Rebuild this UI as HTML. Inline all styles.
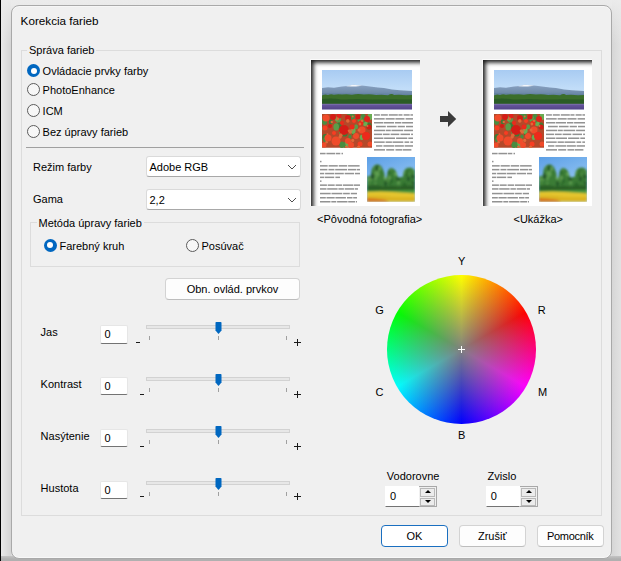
<!DOCTYPE html>
<html><head><meta charset="utf-8">
<style>
*{margin:0;padding:0;box-sizing:border-box}
html,body{width:621px;height:561px;overflow:hidden}
body{position:relative;background:#dcdcdc;font-family:"Liberation Sans",sans-serif;font-size:11px;color:#000}
.a{position:absolute}
.t{position:absolute;line-height:13px;white-space:nowrap}
#win{position:absolute;left:11px;top:5px;width:601px;height:554px;border:1px solid #a9a9a9;border-radius:8px;background:#f0f0f0;box-shadow:inset 0 1px #f6f6f6,inset 0 -1px #f8f8f8}
.grp{position:absolute;border:1px solid #dcdcdc}
.gt{position:absolute;line-height:13px;background:#f0f0f0;padding:0 2px;white-space:nowrap}
.rad{position:absolute;width:13px;height:13px;border-radius:50%;border:1px solid #5b5b5b;background:#f7f7f7}
.rad.on{border:none;background:#0067c0}
.rad.on::after{content:"";position:absolute;left:3.5px;top:3.5px;width:6px;height:6px;border-radius:50%;background:#fff}
.combo{position:absolute;background:#fff;border:1px solid #dadada;border-bottom-color:#a8a8a8;border-radius:3px}
.btn{position:absolute;background:#fdfdfd;border:1px solid #d3d3d3;border-bottom-color:#bdbdbd;border-radius:4px;text-align:center;line-height:20.5px}
.edit{position:absolute;background:#fff;border:1px solid #e6e6e6;border-bottom-color:#737373;border-radius:2px}
.track{position:absolute;height:4px;background:#e7e7e7;border:1px solid #d2d2d2}
.tick{position:absolute;width:1px;height:4px;background:#a0a0a0}
.thumb{position:absolute}
.spin{position:absolute;width:18px;height:20.6px;border:1px solid #a8a8a8;border-left:none;background:#f0f0f0}
.sb{position:absolute;left:1px;width:15px;height:8.6px;border:1px solid #b9b9b9;background:#ececec}
.up,.dn{position:absolute;left:4px;width:0;height:0;border-left:3px solid transparent;border-right:3px solid transparent}
.up{top:1px;border-bottom:3.3px solid #000}
.dn{top:1px;border-top:3.3px solid #000}
</style></head><body>
<div class="a" style="left:0;top:0;width:1px;height:561px;background:#000"></div>
<div class="a" style="left:1px;top:0;width:620px;height:6px;background:#e4e4e4"></div>
<div class="a" style="left:1px;top:0;width:10px;height:561px;background:linear-gradient(90deg,#e8e8e8,#d4d4d4)"></div>
<div class="a" style="left:612px;top:0;width:9px;height:561px;background:linear-gradient(90deg,#d6d6d6,#e2e2e2)"></div>
<div class="a" style="left:1px;top:0;width:620px;height:45px;background:linear-gradient(180deg,#ebebeb 0,rgba(235,235,235,0.6) 15px,rgba(235,235,235,0) 45px)"></div>
<div class="a" style="left:1px;top:556px;width:620px;height:5px;background:linear-gradient(180deg,#c4c4c4,#b0b0b0 3px)"></div>
<div id="win"></div>

<div class="t" style="left:20.6px;top:13.6px;font-size:11.7px">Korekcia farieb</div>

<!-- main group -->
<div class="grp" style="left:21px;top:50px;width:581px;height:466px"></div>
<div class="gt" style="left:27px;top:44px">Správa farieb</div>

<div class="rad on" style="left:27px;top:64px"></div><div class="t" style="left:42.6px;top:64.5px">Ovládacie prvky farby</div>
<div class="rad" style="left:27px;top:83px"></div><div class="t" style="left:42.6px;top:83.5px">PhotoEnhance</div>
<div class="rad" style="left:27px;top:104px"></div><div class="t" style="left:42.6px;top:105px">ICM</div>
<div class="rad" style="left:27px;top:125px"></div><div class="t" style="left:42.6px;top:125.5px">Bez úpravy farieb</div>

<div class="a" style="left:26px;top:147px;width:278px;height:1px;background:#a0a0a0"></div>

<div class="t" style="left:33px;top:160.5px">Režim farby</div>
<div class="t" style="left:33px;top:192.5px">Gama</div>

<div class="combo" style="left:146px;top:156px;width:155px;height:21px"></div>
<div class="t" style="left:149.5px;top:160.5px">Adobe RGB</div>
<div class="combo" style="left:146px;top:189px;width:155px;height:21px"></div>
<div class="t" style="left:149.5px;top:193.5px">2,2</div>

<!-- inner group -->
<div class="grp" style="left:30px;top:222px;width:270px;height:45px"></div>
<div class="gt" style="left:36.5px;top:216.5px">Metóda úpravy farieb</div>
<div class="rad on" style="left:43.5px;top:238.5px"></div><div class="t" style="left:59.5px;top:239.5px">Farebný kruh</div>
<div class="rad" style="left:185.5px;top:238.5px"></div><div class="t" style="left:201.5px;top:239.5px">Posúvač</div>

<div class="btn" style="left:165px;top:278px;width:135px;height:22px">Obn. ovlád. prvkov</div>


<!-- previews -->
<div class="t" style="left:317px;top:212.5px">&lt;Pôvodná fotografia&gt;</div>
<div class="t" style="left:513.5px;top:212.5px">&lt;Ukážka&gt;</div>

<!-- color wheel -->
<div class="a" style="left:386.7px;top:274.5px;width:149px;height:149px;border-radius:50%;background:radial-gradient(circle closest-side,#808080,rgba(128,128,128,0)),conic-gradient(#ff0 0deg,#f00 60deg,#f0f 120deg,#00f 180deg,#0ff 240deg,#0f0 300deg,#ff0 360deg)"></div>


<div class="btn" style="left:381px;top:525px;width:67px;height:22px;border:1.5px solid #1a6fc0;background:#fff">OK</div>
<div class="btn" style="left:459px;top:525px;width:66.5px;height:22px">Zrušiť</div>
<div class="btn" style="left:537px;top:525px;width:66.5px;height:22px;letter-spacing:-0.3px">Pomocník</div>

<div class="t" style="left:40.6px;top:325.8px">Jas</div>
<div class="edit" style="left:100px;top:325.0px;width:28px;height:18.6px"></div>
<div class="t" style="left:104.4px;top:327.6px">0</div>
<div class="a" style="left:136px;top:341.9px;width:4px;height:1.15px;background:#1a1a1a"></div>
<div class="a" style="left:294px;top:341.9px;width:7px;height:1.15px;background:#1a1a1a"></div><div class="a" style="left:296.9px;top:339.0px;width:1.15px;height:7px;background:#1a1a1a"></div>
<div class="track" style="left:146px;top:325.0px;width:144px"></div>
<div class="tick" style="left:149px;top:336.0px"></div>
<div class="tick" style="left:218px;top:336.0px"></div>
<div class="tick" style="left:286px;top:336.0px"></div>
<svg class="a" style="left:215px;top:322.0px" width="7" height="12" viewBox="0 0 7 12"><path d="M0.5 0.8Q0.5 0 1.3 0H5.7Q6.5 0 6.5 0.8V8.5L3.5 12L0.5 8.5Z" fill="#0067c0"/></svg>
<div class="t" style="left:40.6px;top:377.8px">Kontrast</div>
<div class="edit" style="left:100px;top:376.9px;width:28px;height:18.6px"></div>
<div class="t" style="left:104.4px;top:379.6px">0</div>
<div class="a" style="left:140px;top:393.8px;width:4px;height:1.15px;background:#1a1a1a"></div>
<div class="a" style="left:294px;top:393.8px;width:7px;height:1.15px;background:#1a1a1a"></div><div class="a" style="left:296.9px;top:390.9px;width:1.15px;height:7px;background:#1a1a1a"></div>
<div class="track" style="left:146px;top:377.0px;width:144px"></div>
<div class="tick" style="left:149px;top:388.0px"></div>
<div class="tick" style="left:218px;top:388.0px"></div>
<div class="tick" style="left:286px;top:388.0px"></div>
<svg class="a" style="left:215px;top:374.0px" width="7" height="12" viewBox="0 0 7 12"><path d="M0.5 0.8Q0.5 0 1.3 0H5.7Q6.5 0 6.5 0.8V8.5L3.5 12L0.5 8.5Z" fill="#0067c0"/></svg>
<div class="t" style="left:40.6px;top:429.8px">Nasýtenie</div>
<div class="edit" style="left:100px;top:428.7px;width:28px;height:18.6px"></div>
<div class="t" style="left:104.4px;top:431.6px">0</div>
<div class="a" style="left:140px;top:445.8px;width:4px;height:1.15px;background:#1a1a1a"></div>
<div class="a" style="left:294px;top:445.8px;width:7px;height:1.15px;background:#1a1a1a"></div><div class="a" style="left:296.9px;top:442.9px;width:1.15px;height:7px;background:#1a1a1a"></div>
<div class="track" style="left:146px;top:429.0px;width:144px"></div>
<div class="tick" style="left:149px;top:440.0px"></div>
<div class="tick" style="left:218px;top:440.0px"></div>
<div class="tick" style="left:286px;top:440.0px"></div>
<svg class="a" style="left:215px;top:426.0px" width="7" height="12" viewBox="0 0 7 12"><path d="M0.5 0.8Q0.5 0 1.3 0H5.7Q6.5 0 6.5 0.8V8.5L3.5 12L0.5 8.5Z" fill="#0067c0"/></svg>
<div class="t" style="left:40.6px;top:481.8px">Hustota</div>
<div class="edit" style="left:100px;top:480.6px;width:28px;height:18.6px"></div>
<div class="t" style="left:104.4px;top:483.6px">0</div>
<div class="a" style="left:140px;top:495.9px;width:4px;height:1.15px;background:#1a1a1a"></div>
<div class="a" style="left:294px;top:495.9px;width:7px;height:1.15px;background:#1a1a1a"></div><div class="a" style="left:296.9px;top:493.0px;width:1.15px;height:7px;background:#1a1a1a"></div>
<div class="track" style="left:146px;top:481.0px;width:144px"></div>
<div class="tick" style="left:149px;top:492.0px"></div>
<div class="tick" style="left:218px;top:492.0px"></div>
<div class="tick" style="left:286px;top:492.0px"></div>
<svg class="a" style="left:215px;top:478.0px" width="7" height="12" viewBox="0 0 7 12"><path d="M0.5 0.8Q0.5 0 1.3 0H5.7Q6.5 0 6.5 0.8V8.5L3.5 12L0.5 8.5Z" fill="#0067c0"/></svg>
<div class="t" style="left:451.6px;top:255.3px;width:20px;text-align:center">Y</div>
<div class="t" style="left:369.6px;top:303.7px;width:20px;text-align:center">G</div>
<div class="t" style="left:531.8px;top:303.7px;width:20px;text-align:center">R</div>
<div class="t" style="left:369.6px;top:386.3px;width:20px;text-align:center">C</div>
<div class="t" style="left:532.5px;top:386.3px;width:20px;text-align:center">M</div>
<div class="t" style="left:451.6px;top:428.5px;width:20px;text-align:center">B</div>
<div class="t" style="left:386.8px;top:469.6px">Vodorovne</div>
<div class="edit" style="left:385.0px;top:486.3px;width:34.5px;height:20.5px;border-color:#fff #fff #737373 #fff;border-radius:0"></div>
<div class="t" style="left:390.0px;top:489.6px">0</div>
<div class="spin" style="left:419.0px;top:486.3px"><div class="sb" style="top:1px"><div class="up"></div></div><div class="sb" style="top:10.4px"><div class="dn"></div></div></div>
<div class="t" style="left:487.6px;top:469.6px">Zvislo</div>
<div class="edit" style="left:485.8px;top:486.3px;width:34.5px;height:20.5px;border-color:#fff #fff #737373 #fff;border-radius:0"></div>
<div class="t" style="left:490.8px;top:489.6px">0</div>
<div class="spin" style="left:519.8px;top:486.3px"><div class="sb" style="top:1px"><div class="up"></div></div><div class="sb" style="top:10.4px"><div class="dn"></div></div></div>
<div class="a" style="left:310px;top:59px;width:110.1px;height:147px;border-left:1px solid #fafafa;border-top:1px solid #fafafa;box-sizing:border-box"></div>
<div class="a" style="left:311px;top:60px;width:109.1px;height:146px;background:#fff;overflow:hidden">
<svg class="a" style="left:11px;top:10px" width="90" height="39.5" viewBox="0 0 90 39.5"><defs><linearGradient id="sk" x1="0" y1="0" x2="0" y2="1"><stop offset="0" stop-color="#a8cbf2"/><stop offset=".45" stop-color="#c0dcf8"/><stop offset="1" stop-color="#d8ecfa"/></linearGradient><linearGradient id="lv" x1="0" y1="0" x2="0" y2="1"><stop offset="0" stop-color="#8276b0"/><stop offset=".3" stop-color="#62529a"/><stop offset="1" stop-color="#524488"/></linearGradient><linearGradient id="mt" x1="0" y1="0" x2="0" y2="1"><stop offset="0" stop-color="#8aa2c2"/><stop offset="1" stop-color="#62809e"/></linearGradient><filter id="bl" x="-5%" y="-5%" width="110%" height="110%"><feGaussianBlur stdDeviation="0.45"/></filter></defs><rect width="90" height="39.5" fill="url(#sk)"/><g filter="url(#bl)"><path d="M0 18 L6 17.2 L12 17.8 L20 16.5 L26 16 L31 14.8 L36 15.3 L42 15.8 L50 16.8 L56 17.5 L62 18 L70 19.5 L78 20.3 L90 21 V27 H0Z" fill="url(#mt)"/><path d="M24 16.3 L31 14.8 L36 15.3 L40 15.8 L34 16.4 L29 16.6Z" fill="#f2f6fb"/><path d="M0 23 L90 24 V27 H0Z" fill="#6582a2"/><path d="M0 25.5 Q3 24 6 25 Q9 23.8 12 24.8 Q16 23.6 20 24.6 Q25 23.8 30 24.7 Q36 23.5 42 24.6 Q48 23.8 54 25 Q60 24.2 66 25.2 Q70 23 72 25 Q78 24.5 84 25.2 L90 25 V34 H0Z" fill="#3a6e2c"/><path d="M0 29 Q10 28 20 29.5 Q35 28.5 50 29.5 Q70 28.8 90 29.5 V34 H0Z" fill="#2c5c26"/><rect y="33.8" width="90" height="5.7" fill="url(#lv)"/></g></svg>
<svg class="a" style="left:11px;top:54px" width="50" height="33.5" viewBox="0 0 50 33.5"><defs><filter id="bl2" x="0" y="0" width="100%" height="100%"><feGaussianBlur stdDeviation="0.55"/></filter></defs><rect width="50" height="33.5" fill="#b4482a"/><g filter="url(#bl2)"><rect width="50" height="33.5" fill="#b4482a"/><ellipse cx="16.2" cy="5.1" rx="2.8" ry="3.6" fill="#5c9c4a"/><ellipse cx="41.1" cy="3.2" rx="2.7" ry="3.5" fill="#4a8c40"/><ellipse cx="1.9" cy="14.5" rx="1.6" ry="2.1" fill="#5c9c4a"/><ellipse cx="27.6" cy="2.0" rx="2.6" ry="3.4" fill="#4a8c40"/><ellipse cx="31.5" cy="19.5" rx="1.6" ry="2.1" fill="#3c7c36"/><ellipse cx="2.5" cy="7.4" rx="2.6" ry="3.4" fill="#4a8c40"/><ellipse cx="14.5" cy="4.8" rx="1.7" ry="2.3" fill="#6aac52"/><ellipse cx="28.0" cy="22.8" rx="1.7" ry="2.2" fill="#4a8c40"/><ellipse cx="18.6" cy="18.3" rx="1.6" ry="2.1" fill="#5c9c4a"/><ellipse cx="31.0" cy="16.6" rx="2.6" ry="3.3" fill="#6aac52"/><ellipse cx="23.3" cy="30.9" rx="2.2" ry="2.9" fill="#4a8c40"/><ellipse cx="39.7" cy="23.4" rx="2.0" ry="2.6" fill="#6aac52"/><ellipse cx="26.3" cy="29.3" rx="3.0" ry="3.8" fill="#6aac52"/><ellipse cx="30.4" cy="2.5" rx="2.5" ry="3.3" fill="#4a8c40"/><ellipse cx="37.9" cy="5.1" rx="2.5" ry="3.2" fill="#5c9c4a"/><ellipse cx="48.1" cy="2.6" rx="2.6" ry="3.4" fill="#6aac52"/><ellipse cx="17.0" cy="11.7" rx="2.5" ry="3.2" fill="#3c7c36"/><ellipse cx="3.4" cy="3.1" rx="2.0" ry="2.7" fill="#5c9c4a"/><ellipse cx="3.0" cy="23.5" rx="2.8" ry="3.6" fill="#3c7c36"/><ellipse cx="14.2" cy="12.9" rx="2.8" ry="3.7" fill="#5c9c4a"/><ellipse cx="47.0" cy="11.9" rx="2.7" ry="3.5" fill="#3c7c36"/><ellipse cx="2.9" cy="25.7" rx="1.8" ry="2.3" fill="#4a8c40"/><ellipse cx="19.9" cy="30.7" rx="2.5" ry="3.2" fill="#4a8c40"/><ellipse cx="22.5" cy="18.4" rx="3.3" ry="4.2" fill="#3c7c36"/><ellipse cx="43.2" cy="9.3" rx="2.3" ry="3.0" fill="#6aac52"/><ellipse cx="34.1" cy="12.7" rx="2.0" ry="2.5" fill="#5c9c4a"/><ellipse cx="8.8" cy="7.8" rx="2.0" ry="2.6" fill="#3c7c36"/><ellipse cx="41.6" cy="6.1" rx="2.1" ry="2.7" fill="#4a8c40"/><circle cx="4" cy="4" r="3.5" fill="#f04c2c"/><circle cx="11" cy="3" r="3" fill="#d41e16"/><circle cx="17" cy="2" r="2.5" fill="#e0221a"/><circle cx="26" cy="4" r="3" fill="#d41e16"/><circle cx="36" cy="3" r="2.5" fill="#d41e16"/><circle cx="45" cy="5" r="3" fill="#e0221a"/><circle cx="3" cy="14" r="2.5" fill="#f83c22"/><circle cx="8" cy="12" r="2" fill="#d41e16"/><circle cx="22" cy="16" r="5" fill="#d41e16"/><circle cx="30" cy="13" r="2.5" fill="#ec2a1a"/><circle cx="40" cy="16" r="3.5" fill="#f04c2c"/><circle cx="47" cy="13" r="2.5" fill="#d41e16"/><circle cx="6" cy="24" r="3.5" fill="#f04c2c"/><circle cx="14" cy="27" r="4.5" fill="#f04c2c"/><circle cx="26" cy="27" r="3" fill="#f04c2c"/><circle cx="34" cy="22" r="3" fill="#f04c2c"/><circle cx="44" cy="22" r="4" fill="#ec2a1a"/><circle cx="48" cy="30" r="2.5" fill="#f04c2c"/><circle cx="2" cy="31" r="2.5" fill="#f04c2c"/><circle cx="20" cy="9" r="2" fill="#ec2a1a"/><circle cx="32" cy="7" r="2" fill="#f83c22"/><circle cx="39" cy="9" r="2.5" fill="#ec2a1a"/><circle cx="12" cy="19" r="2" fill="#f83c22"/><circle cx="29" cy="31" r="3" fill="#f04c2c"/><circle cx="38" cy="30" r="2.5" fill="#f83c22"/><circle cx="5.5" cy="20.1" r="0.9" fill="#e06838"/><circle cx="28.3" cy="18.0" r="1.7" fill="#e06838"/><circle cx="30.7" cy="2.4" r="1.0" fill="#e06838"/><circle cx="18.8" cy="21.3" r="1.8" fill="#e06838"/><circle cx="30.1" cy="15.9" r="0.9" fill="#e06838"/><circle cx="24.4" cy="32.8" r="1.3" fill="#e06838"/><circle cx="15.6" cy="4.8" r="1.5" fill="#e06838"/><circle cx="37.0" cy="16.0" r="1.5" fill="#e06838"/><circle cx="25.8" cy="6.9" r="1.8" fill="#e06838"/><circle cx="18.1" cy="23.1" r="1.7" fill="#e06838"/><circle cx="37.9" cy="10.0" r="1.4" fill="#e06838"/><circle cx="4.6" cy="28.3" r="1.3" fill="#e06838"/><circle cx="45.4" cy="11.9" r="1.0" fill="#e06838"/><circle cx="27.1" cy="16.8" r="1.4" fill="#e06838"/><circle cx="30.7" cy="26.4" r="1.6" fill="#e06838"/><circle cx="9.8" cy="8.0" r="1.2" fill="#e06838"/><circle cx="40.2" cy="6.7" r="1.3" fill="#e06838"/><circle cx="36.6" cy="33.2" r="1.6" fill="#e06838"/></g></svg>
<svg class="a" style="left:56.1px;top:97.1px" width="48" height="44.6" viewBox="0 0 48 44.6"><defs><linearGradient id="sk2" x1="0" y1="0" x2="0.4" y2="1"><stop offset="0" stop-color="#5c9fe6"/><stop offset=".6" stop-color="#86bcf0"/><stop offset="1" stop-color="#a6d2f4"/></linearGradient><filter id="bl3" x="-5%" y="-5%" width="110%" height="110%"><feGaussianBlur stdDeviation="0.8"/></filter><clipPath id="tc"><path d="M0 20 Q2 18 4 19 Q4 10 8 8 Q12 6.5 14.5 10 Q17.5 14 18 21 Q19 22 20 19 Q20.5 12 24 11 Q28.5 11.5 30 17 Q31 21 32 21 Q34 19 36 20 Q36 13 40 11 Q44 9.5 46 12 Q48 13 48 15 V36 H0Z"/></clipPath></defs><rect width="48" height="44.6" fill="url(#sk2)"/><g filter="url(#bl3)"><g clip-path="url(#tc)"><rect width="48" height="44.6" fill="#3a7c36"/><ellipse cx="21.7" cy="21.7" rx="2.1" ry="2.9" fill="#26582a"/><ellipse cx="21.7" cy="29.9" rx="1.1" ry="1.5" fill="#6aa858"/><ellipse cx="22.8" cy="23.2" rx="1.1" ry="1.5" fill="#26582a"/><ellipse cx="14.6" cy="8.5" rx="1.9" ry="2.7" fill="#2c6a2a"/><ellipse cx="28.6" cy="17.1" rx="1.4" ry="2.0" fill="#6aa858"/><ellipse cx="31.2" cy="23.4" rx="2.0" ry="2.8" fill="#2c6a2a"/><ellipse cx="2.9" cy="11.3" rx="1.1" ry="1.6" fill="#2c6a2a"/><ellipse cx="37.3" cy="15.1" rx="1.6" ry="2.3" fill="#5a9a4c"/><ellipse cx="24.9" cy="23.9" rx="1.5" ry="2.1" fill="#2c6a2a"/><ellipse cx="22.0" cy="13.8" rx="2.2" ry="3.1" fill="#2c6a2a"/><ellipse cx="34.0" cy="14.8" rx="1.1" ry="1.6" fill="#48883e"/><ellipse cx="1.4" cy="21.8" rx="1.0" ry="1.3" fill="#2c6a2a"/><ellipse cx="40.6" cy="16.8" rx="2.1" ry="3.0" fill="#2c6a2a"/><ellipse cx="10.2" cy="32.0" rx="0.9" ry="1.2" fill="#26582a"/><ellipse cx="47.1" cy="17.1" rx="0.9" ry="1.3" fill="#5a9a4c"/><ellipse cx="37.4" cy="13.6" rx="0.9" ry="1.3" fill="#48883e"/><ellipse cx="0.7" cy="17.5" rx="2.1" ry="2.9" fill="#5a9a4c"/><ellipse cx="11.8" cy="8.8" rx="0.9" ry="1.2" fill="#26582a"/><ellipse cx="8.5" cy="21.7" rx="1.4" ry="2.0" fill="#5a9a4c"/><ellipse cx="47.3" cy="27.5" rx="1.4" ry="1.9" fill="#26582a"/><ellipse cx="5.6" cy="17.8" rx="1.1" ry="1.5" fill="#48883e"/><ellipse cx="41.5" cy="33.3" rx="1.6" ry="2.3" fill="#2c6a2a"/><ellipse cx="10.1" cy="17.0" rx="2.0" ry="2.8" fill="#6aa858"/><ellipse cx="4.8" cy="33.7" rx="1.1" ry="1.5" fill="#48883e"/><ellipse cx="0.5" cy="23.1" rx="2.0" ry="2.7" fill="#26582a"/><ellipse cx="3.5" cy="8.5" rx="1.6" ry="2.3" fill="#5a9a4c"/><ellipse cx="0.7" cy="16.3" rx="1.7" ry="2.3" fill="#5a9a4c"/><ellipse cx="46.0" cy="19.5" rx="1.6" ry="2.2" fill="#26582a"/><ellipse cx="8.8" cy="10.3" rx="2.1" ry="2.9" fill="#6aa858"/><ellipse cx="12.0" cy="11.3" rx="1.8" ry="2.6" fill="#6aa858"/><ellipse cx="9.4" cy="32.6" rx="2.0" ry="2.8" fill="#6aa858"/><ellipse cx="3.8" cy="7.3" rx="1.0" ry="1.3" fill="#6aa858"/><ellipse cx="46.2" cy="12.7" rx="1.8" ry="2.5" fill="#48883e"/><ellipse cx="20.2" cy="31.3" rx="1.5" ry="2.1" fill="#6aa858"/><ellipse cx="8.4" cy="26.2" rx="0.9" ry="1.3" fill="#5a9a4c"/><ellipse cx="23.0" cy="24.3" rx="1.7" ry="2.3" fill="#2c6a2a"/><ellipse cx="13.5" cy="31.7" rx="1.1" ry="1.5" fill="#2c6a2a"/><ellipse cx="3.3" cy="17.5" rx="1.1" ry="1.6" fill="#2c6a2a"/><ellipse cx="8.5" cy="16.3" rx="1.6" ry="2.2" fill="#5a9a4c"/><ellipse cx="4.4" cy="9.9" rx="1.4" ry="2.0" fill="#48883e"/><ellipse cx="31.5" cy="25.4" rx="1.6" ry="2.3" fill="#5a9a4c"/><ellipse cx="28.3" cy="31.9" rx="1.5" ry="2.1" fill="#48883e"/><ellipse cx="33.6" cy="33.0" rx="0.8" ry="1.2" fill="#2c6a2a"/><ellipse cx="23.1" cy="26.5" rx="1.2" ry="1.7" fill="#2c6a2a"/><ellipse cx="3.6" cy="21.3" rx="1.8" ry="2.6" fill="#5a9a4c"/><ellipse cx="38.1" cy="31.6" rx="1.3" ry="1.8" fill="#26582a"/><ellipse cx="43.2" cy="30.4" rx="1.4" ry="1.9" fill="#2c6a2a"/><ellipse cx="41.4" cy="22.0" rx="1.7" ry="2.3" fill="#26582a"/><ellipse cx="18.2" cy="6.3" rx="0.9" ry="1.3" fill="#2c6a2a"/><ellipse cx="30.7" cy="33.8" rx="2.0" ry="2.8" fill="#48883e"/><ellipse cx="18.6" cy="26.6" rx="1.6" ry="2.3" fill="#26582a"/><ellipse cx="22.2" cy="21.2" rx="1.5" ry="2.1" fill="#6aa858"/><ellipse cx="1.4" cy="22.8" rx="1.5" ry="2.1" fill="#5a9a4c"/><ellipse cx="46.0" cy="9.2" rx="1.9" ry="2.6" fill="#26582a"/><ellipse cx="12.3" cy="6.3" rx="1.2" ry="1.7" fill="#6aa858"/><ellipse cx="9.7" cy="10.7" rx="2.1" ry="2.9" fill="#26582a"/><ellipse cx="23.9" cy="12.8" rx="1.4" ry="1.9" fill="#48883e"/><ellipse cx="9.5" cy="18.1" rx="1.9" ry="2.7" fill="#5a9a4c"/><ellipse cx="42.3" cy="16.8" rx="1.6" ry="2.3" fill="#48883e"/><ellipse cx="10.1" cy="9.8" rx="1.3" ry="1.8" fill="#2c6a2a"/><ellipse cx="34.1" cy="32.6" rx="1.2" ry="1.7" fill="#5a9a4c"/><ellipse cx="5.4" cy="19.2" rx="2.1" ry="2.9" fill="#26582a"/><ellipse cx="18.4" cy="20.6" rx="1.7" ry="2.4" fill="#6aa858"/><ellipse cx="21.7" cy="8.1" rx="0.8" ry="1.2" fill="#6aa858"/><ellipse cx="2.0" cy="25.8" rx="1.6" ry="2.2" fill="#48883e"/><ellipse cx="31.2" cy="21.8" rx="1.7" ry="2.4" fill="#26582a"/><ellipse cx="21.8" cy="6.7" rx="2.0" ry="2.7" fill="#5a9a4c"/><ellipse cx="37.4" cy="28.3" rx="2.2" ry="3.0" fill="#2c6a2a"/><ellipse cx="21.4" cy="23.6" rx="1.7" ry="2.4" fill="#48883e"/><ellipse cx="46.0" cy="25.2" rx="1.1" ry="1.5" fill="#26582a"/></g><path d="M0 29 Q8 27.5 16 29.5 Q24 28 32 29.5 Q40 28 48 29 V36 H0Z" fill="#2a5e26"/><path d="M0 33.4 L48 33 V37 H0Z" fill="#4c9a3e"/><path d="M0 35 L14 34.6 Q30 35 48 36.6 V44.6 H0Z" fill="#e4c42e"/><path d="M0 39 Q12 38.5 24 40 Q36 40.5 48 40 V44.6 H0Z" fill="#dcb424"/><path d="M0 41.2 Q8 41 18 42.8 L22 44.6 H0Z" fill="#d8701e"/></g></svg>
<svg class="a" style="left:0;top:0" width="110" height="147" viewBox="0 0 110 147"><defs><filter id="bt" x="-2%" y="-2%" width="104%" height="104%"><feGaussianBlur stdDeviation="0.3"/></filter></defs><g fill="#6e6e6e" opacity=".75" filter="url(#bt)"><rect x="63.0" y="54.2" width="5.9" height="1.5"/><rect x="69.8" y="54.2" width="7.0" height="1.5"/><rect x="77.8" y="54.2" width="9.0" height="1.5"/><rect x="87.4" y="54.2" width="4.1" height="1.5"/><rect x="92.6" y="54.2" width="6.1" height="1.5"/><rect x="99.4" y="54.2" width="2.6" height="1.5"/><rect x="63.0" y="58.1" width="10.7" height="1.5"/><rect x="74.6" y="58.1" width="9.1" height="1.5"/><rect x="84.4" y="58.1" width="9.1" height="1.5"/><rect x="94.6" y="58.1" width="7.4" height="1.5"/><rect x="63.0" y="62.0" width="9.4" height="1.5"/><rect x="73.0" y="62.0" width="10.1" height="1.5"/><rect x="84.0" y="62.0" width="6.4" height="1.5"/><rect x="91.1" y="62.0" width="10.9" height="1.5"/><rect x="65.0" y="65.8" width="9.8" height="1.5"/><rect x="75.9" y="65.8" width="9.7" height="1.5"/><rect x="86.7" y="65.8" width="7.2" height="1.5"/><rect x="95.0" y="65.8" width="7.0" height="1.5"/><rect x="63.0" y="69.7" width="11.0" height="1.5"/><rect x="74.7" y="69.7" width="5.1" height="1.5"/><rect x="80.5" y="69.7" width="11.7" height="1.5"/><rect x="93.1" y="69.7" width="8.9" height="1.5"/><rect x="63.0" y="73.6" width="8.1" height="1.5"/><rect x="71.9" y="73.6" width="6.8" height="1.5"/><rect x="79.6" y="73.6" width="8.7" height="1.5"/><rect x="89.5" y="73.6" width="9.5" height="1.5"/><rect x="100.1" y="73.6" width="1.9" height="1.5"/><rect x="63.0" y="77.5" width="9.4" height="1.5"/><rect x="73.1" y="77.5" width="10.9" height="1.5"/><rect x="85.1" y="77.5" width="11.2" height="1.5"/><rect x="97.3" y="77.5" width="4.7" height="1.5"/><rect x="63.0" y="81.4" width="10.7" height="1.5"/><rect x="74.6" y="81.4" width="6.3" height="1.5"/><rect x="81.5" y="81.4" width="10.8" height="1.5"/><rect x="93.5" y="81.4" width="4.7" height="1.5"/><rect x="99.3" y="81.4" width="2.7" height="1.5"/><rect x="65.0" y="85.2" width="6.4" height="1.5"/><rect x="72.4" y="85.2" width="11.0" height="1.5"/><rect x="84.0" y="85.2" width="8.9" height="1.5"/><rect x="93.6" y="85.2" width="8.4" height="1.5"/><rect x="63.0" y="89.1" width="11.0" height="1.5"/><rect x="75.2" y="89.1" width="8.0" height="1.5"/><rect x="84.5" y="89.1" width="6.5" height="1.5"/><rect x="91.6" y="89.1" width="8.8" height="1.5"/><rect x="9.0" y="92.8" width="5.6" height="1.5"/><rect x="15.4" y="92.8" width="8.9" height="1.5"/><rect x="25.0" y="92.8" width="4.3" height="1.5"/><rect x="30.5" y="92.8" width="1.5" height="1.5"/><rect x="9.0" y="100.8" width="1.5" height="1.5"/><rect x="9.0" y="105.1" width="7.7" height="1.5"/><rect x="17.6" y="105.1" width="9.2" height="1.5"/><rect x="27.7" y="105.1" width="8.5" height="1.5"/><rect x="37.1" y="105.1" width="11.5" height="1.5"/><rect x="9.0" y="108.9" width="7.4" height="1.5"/><rect x="17.5" y="108.9" width="5.9" height="1.5"/><rect x="24.2" y="108.9" width="11.8" height="1.5"/><rect x="36.9" y="108.9" width="8.4" height="1.5"/><rect x="45.9" y="108.9" width="3.1" height="1.5"/><rect x="9.0" y="112.8" width="4.2" height="1.5"/><rect x="14.1" y="112.8" width="9.1" height="1.5"/><rect x="23.8" y="112.8" width="9.0" height="1.5"/><rect x="33.7" y="112.8" width="9.4" height="1.5"/><rect x="44.0" y="112.8" width="5.0" height="1.5"/><rect x="9.0" y="116.6" width="4.2" height="1.5"/><rect x="13.8" y="116.6" width="9.4" height="1.5"/><rect x="24.4" y="116.6" width="4.6" height="1.5"/><rect x="9.0" y="120.4" width="1.5" height="1.5"/><rect x="9.0" y="124.4" width="6.9" height="1.5"/><rect x="16.7" y="124.4" width="7.0" height="1.5"/><rect x="24.6" y="124.4" width="6.4" height="1.5"/><rect x="31.8" y="124.4" width="10.2" height="1.5"/><rect x="42.6" y="124.4" width="6.4" height="1.5"/><rect x="9.0" y="128.2" width="6.5" height="1.5"/><rect x="16.2" y="128.2" width="10.4" height="1.5"/><rect x="27.4" y="128.2" width="5.5" height="1.5"/><rect x="33.7" y="128.2" width="9.6" height="1.5"/><rect x="44.0" y="128.2" width="3.0" height="1.5"/><rect x="9.0" y="132.8" width="10.7" height="1.5"/><rect x="20.5" y="132.8" width="10.8" height="1.5"/><rect x="32.1" y="132.8" width="6.7" height="1.5"/><rect x="39.8" y="132.8" width="6.2" height="1.5"/><rect x="9.0" y="137.0" width="5.8" height="1.5"/><rect x="15.5" y="137.0" width="8.2" height="1.5"/><rect x="24.4" y="137.0" width="10.5" height="1.5"/><rect x="36.0" y="137.0" width="5.5" height="1.5"/><rect x="42.2" y="137.0" width="3.8" height="1.5"/><rect x="9.0" y="141.0" width="10.5" height="1.5"/><rect x="20.3" y="141.0" width="5.0" height="1.5"/><rect x="26.1" y="141.0" width="10.4" height="1.5"/><rect x="37.2" y="141.0" width="6.8" height="1.5"/><rect x="44.8" y="141.0" width="1.2" height="1.5"/></g></svg>
<div class="a" style="left:0;top:0;width:100%;height:100%;box-shadow:inset 4px 4px 4px -1.5px rgba(0,0,0,.9)"></div>
</div>
<div class="a" style="left:482px;top:59px;width:110.1px;height:147px;border-left:1px solid #fafafa;border-top:1px solid #fafafa;box-sizing:border-box"></div>
<div class="a" style="left:483px;top:60px;width:109.1px;height:146px;background:#fff;overflow:hidden">
<svg class="a" style="left:11px;top:10px" width="90" height="39.5" viewBox="0 0 90 39.5"><defs><linearGradient id="sk" x1="0" y1="0" x2="0" y2="1"><stop offset="0" stop-color="#a8cbf2"/><stop offset=".45" stop-color="#c0dcf8"/><stop offset="1" stop-color="#d8ecfa"/></linearGradient><linearGradient id="lv" x1="0" y1="0" x2="0" y2="1"><stop offset="0" stop-color="#8276b0"/><stop offset=".3" stop-color="#62529a"/><stop offset="1" stop-color="#524488"/></linearGradient><linearGradient id="mt" x1="0" y1="0" x2="0" y2="1"><stop offset="0" stop-color="#8aa2c2"/><stop offset="1" stop-color="#62809e"/></linearGradient><filter id="bl" x="-5%" y="-5%" width="110%" height="110%"><feGaussianBlur stdDeviation="0.45"/></filter></defs><rect width="90" height="39.5" fill="url(#sk)"/><g filter="url(#bl)"><path d="M0 18 L6 17.2 L12 17.8 L20 16.5 L26 16 L31 14.8 L36 15.3 L42 15.8 L50 16.8 L56 17.5 L62 18 L70 19.5 L78 20.3 L90 21 V27 H0Z" fill="url(#mt)"/><path d="M24 16.3 L31 14.8 L36 15.3 L40 15.8 L34 16.4 L29 16.6Z" fill="#f2f6fb"/><path d="M0 23 L90 24 V27 H0Z" fill="#6582a2"/><path d="M0 25.5 Q3 24 6 25 Q9 23.8 12 24.8 Q16 23.6 20 24.6 Q25 23.8 30 24.7 Q36 23.5 42 24.6 Q48 23.8 54 25 Q60 24.2 66 25.2 Q70 23 72 25 Q78 24.5 84 25.2 L90 25 V34 H0Z" fill="#3a6e2c"/><path d="M0 29 Q10 28 20 29.5 Q35 28.5 50 29.5 Q70 28.8 90 29.5 V34 H0Z" fill="#2c5c26"/><rect y="33.8" width="90" height="5.7" fill="url(#lv)"/></g></svg>
<svg class="a" style="left:11px;top:54px" width="50" height="33.5" viewBox="0 0 50 33.5"><defs><filter id="bl2" x="0" y="0" width="100%" height="100%"><feGaussianBlur stdDeviation="0.55"/></filter></defs><rect width="50" height="33.5" fill="#b4482a"/><g filter="url(#bl2)"><rect width="50" height="33.5" fill="#b4482a"/><ellipse cx="16.2" cy="5.1" rx="2.8" ry="3.6" fill="#5c9c4a"/><ellipse cx="41.1" cy="3.2" rx="2.7" ry="3.5" fill="#4a8c40"/><ellipse cx="1.9" cy="14.5" rx="1.6" ry="2.1" fill="#5c9c4a"/><ellipse cx="27.6" cy="2.0" rx="2.6" ry="3.4" fill="#4a8c40"/><ellipse cx="31.5" cy="19.5" rx="1.6" ry="2.1" fill="#3c7c36"/><ellipse cx="2.5" cy="7.4" rx="2.6" ry="3.4" fill="#4a8c40"/><ellipse cx="14.5" cy="4.8" rx="1.7" ry="2.3" fill="#6aac52"/><ellipse cx="28.0" cy="22.8" rx="1.7" ry="2.2" fill="#4a8c40"/><ellipse cx="18.6" cy="18.3" rx="1.6" ry="2.1" fill="#5c9c4a"/><ellipse cx="31.0" cy="16.6" rx="2.6" ry="3.3" fill="#6aac52"/><ellipse cx="23.3" cy="30.9" rx="2.2" ry="2.9" fill="#4a8c40"/><ellipse cx="39.7" cy="23.4" rx="2.0" ry="2.6" fill="#6aac52"/><ellipse cx="26.3" cy="29.3" rx="3.0" ry="3.8" fill="#6aac52"/><ellipse cx="30.4" cy="2.5" rx="2.5" ry="3.3" fill="#4a8c40"/><ellipse cx="37.9" cy="5.1" rx="2.5" ry="3.2" fill="#5c9c4a"/><ellipse cx="48.1" cy="2.6" rx="2.6" ry="3.4" fill="#6aac52"/><ellipse cx="17.0" cy="11.7" rx="2.5" ry="3.2" fill="#3c7c36"/><ellipse cx="3.4" cy="3.1" rx="2.0" ry="2.7" fill="#5c9c4a"/><ellipse cx="3.0" cy="23.5" rx="2.8" ry="3.6" fill="#3c7c36"/><ellipse cx="14.2" cy="12.9" rx="2.8" ry="3.7" fill="#5c9c4a"/><ellipse cx="47.0" cy="11.9" rx="2.7" ry="3.5" fill="#3c7c36"/><ellipse cx="2.9" cy="25.7" rx="1.8" ry="2.3" fill="#4a8c40"/><ellipse cx="19.9" cy="30.7" rx="2.5" ry="3.2" fill="#4a8c40"/><ellipse cx="22.5" cy="18.4" rx="3.3" ry="4.2" fill="#3c7c36"/><ellipse cx="43.2" cy="9.3" rx="2.3" ry="3.0" fill="#6aac52"/><ellipse cx="34.1" cy="12.7" rx="2.0" ry="2.5" fill="#5c9c4a"/><ellipse cx="8.8" cy="7.8" rx="2.0" ry="2.6" fill="#3c7c36"/><ellipse cx="41.6" cy="6.1" rx="2.1" ry="2.7" fill="#4a8c40"/><circle cx="4" cy="4" r="3.5" fill="#f04c2c"/><circle cx="11" cy="3" r="3" fill="#d41e16"/><circle cx="17" cy="2" r="2.5" fill="#e0221a"/><circle cx="26" cy="4" r="3" fill="#d41e16"/><circle cx="36" cy="3" r="2.5" fill="#d41e16"/><circle cx="45" cy="5" r="3" fill="#e0221a"/><circle cx="3" cy="14" r="2.5" fill="#f83c22"/><circle cx="8" cy="12" r="2" fill="#d41e16"/><circle cx="22" cy="16" r="5" fill="#d41e16"/><circle cx="30" cy="13" r="2.5" fill="#ec2a1a"/><circle cx="40" cy="16" r="3.5" fill="#f04c2c"/><circle cx="47" cy="13" r="2.5" fill="#d41e16"/><circle cx="6" cy="24" r="3.5" fill="#f04c2c"/><circle cx="14" cy="27" r="4.5" fill="#f04c2c"/><circle cx="26" cy="27" r="3" fill="#f04c2c"/><circle cx="34" cy="22" r="3" fill="#f04c2c"/><circle cx="44" cy="22" r="4" fill="#ec2a1a"/><circle cx="48" cy="30" r="2.5" fill="#f04c2c"/><circle cx="2" cy="31" r="2.5" fill="#f04c2c"/><circle cx="20" cy="9" r="2" fill="#ec2a1a"/><circle cx="32" cy="7" r="2" fill="#f83c22"/><circle cx="39" cy="9" r="2.5" fill="#ec2a1a"/><circle cx="12" cy="19" r="2" fill="#f83c22"/><circle cx="29" cy="31" r="3" fill="#f04c2c"/><circle cx="38" cy="30" r="2.5" fill="#f83c22"/><circle cx="5.5" cy="20.1" r="0.9" fill="#e06838"/><circle cx="28.3" cy="18.0" r="1.7" fill="#e06838"/><circle cx="30.7" cy="2.4" r="1.0" fill="#e06838"/><circle cx="18.8" cy="21.3" r="1.8" fill="#e06838"/><circle cx="30.1" cy="15.9" r="0.9" fill="#e06838"/><circle cx="24.4" cy="32.8" r="1.3" fill="#e06838"/><circle cx="15.6" cy="4.8" r="1.5" fill="#e06838"/><circle cx="37.0" cy="16.0" r="1.5" fill="#e06838"/><circle cx="25.8" cy="6.9" r="1.8" fill="#e06838"/><circle cx="18.1" cy="23.1" r="1.7" fill="#e06838"/><circle cx="37.9" cy="10.0" r="1.4" fill="#e06838"/><circle cx="4.6" cy="28.3" r="1.3" fill="#e06838"/><circle cx="45.4" cy="11.9" r="1.0" fill="#e06838"/><circle cx="27.1" cy="16.8" r="1.4" fill="#e06838"/><circle cx="30.7" cy="26.4" r="1.6" fill="#e06838"/><circle cx="9.8" cy="8.0" r="1.2" fill="#e06838"/><circle cx="40.2" cy="6.7" r="1.3" fill="#e06838"/><circle cx="36.6" cy="33.2" r="1.6" fill="#e06838"/></g></svg>
<svg class="a" style="left:56.1px;top:97.1px" width="48" height="44.6" viewBox="0 0 48 44.6"><defs><linearGradient id="sk2" x1="0" y1="0" x2="0.4" y2="1"><stop offset="0" stop-color="#5c9fe6"/><stop offset=".6" stop-color="#86bcf0"/><stop offset="1" stop-color="#a6d2f4"/></linearGradient><filter id="bl3" x="-5%" y="-5%" width="110%" height="110%"><feGaussianBlur stdDeviation="0.8"/></filter><clipPath id="tc"><path d="M0 20 Q2 18 4 19 Q4 10 8 8 Q12 6.5 14.5 10 Q17.5 14 18 21 Q19 22 20 19 Q20.5 12 24 11 Q28.5 11.5 30 17 Q31 21 32 21 Q34 19 36 20 Q36 13 40 11 Q44 9.5 46 12 Q48 13 48 15 V36 H0Z"/></clipPath></defs><rect width="48" height="44.6" fill="url(#sk2)"/><g filter="url(#bl3)"><g clip-path="url(#tc)"><rect width="48" height="44.6" fill="#3a7c36"/><ellipse cx="21.7" cy="21.7" rx="2.1" ry="2.9" fill="#26582a"/><ellipse cx="21.7" cy="29.9" rx="1.1" ry="1.5" fill="#6aa858"/><ellipse cx="22.8" cy="23.2" rx="1.1" ry="1.5" fill="#26582a"/><ellipse cx="14.6" cy="8.5" rx="1.9" ry="2.7" fill="#2c6a2a"/><ellipse cx="28.6" cy="17.1" rx="1.4" ry="2.0" fill="#6aa858"/><ellipse cx="31.2" cy="23.4" rx="2.0" ry="2.8" fill="#2c6a2a"/><ellipse cx="2.9" cy="11.3" rx="1.1" ry="1.6" fill="#2c6a2a"/><ellipse cx="37.3" cy="15.1" rx="1.6" ry="2.3" fill="#5a9a4c"/><ellipse cx="24.9" cy="23.9" rx="1.5" ry="2.1" fill="#2c6a2a"/><ellipse cx="22.0" cy="13.8" rx="2.2" ry="3.1" fill="#2c6a2a"/><ellipse cx="34.0" cy="14.8" rx="1.1" ry="1.6" fill="#48883e"/><ellipse cx="1.4" cy="21.8" rx="1.0" ry="1.3" fill="#2c6a2a"/><ellipse cx="40.6" cy="16.8" rx="2.1" ry="3.0" fill="#2c6a2a"/><ellipse cx="10.2" cy="32.0" rx="0.9" ry="1.2" fill="#26582a"/><ellipse cx="47.1" cy="17.1" rx="0.9" ry="1.3" fill="#5a9a4c"/><ellipse cx="37.4" cy="13.6" rx="0.9" ry="1.3" fill="#48883e"/><ellipse cx="0.7" cy="17.5" rx="2.1" ry="2.9" fill="#5a9a4c"/><ellipse cx="11.8" cy="8.8" rx="0.9" ry="1.2" fill="#26582a"/><ellipse cx="8.5" cy="21.7" rx="1.4" ry="2.0" fill="#5a9a4c"/><ellipse cx="47.3" cy="27.5" rx="1.4" ry="1.9" fill="#26582a"/><ellipse cx="5.6" cy="17.8" rx="1.1" ry="1.5" fill="#48883e"/><ellipse cx="41.5" cy="33.3" rx="1.6" ry="2.3" fill="#2c6a2a"/><ellipse cx="10.1" cy="17.0" rx="2.0" ry="2.8" fill="#6aa858"/><ellipse cx="4.8" cy="33.7" rx="1.1" ry="1.5" fill="#48883e"/><ellipse cx="0.5" cy="23.1" rx="2.0" ry="2.7" fill="#26582a"/><ellipse cx="3.5" cy="8.5" rx="1.6" ry="2.3" fill="#5a9a4c"/><ellipse cx="0.7" cy="16.3" rx="1.7" ry="2.3" fill="#5a9a4c"/><ellipse cx="46.0" cy="19.5" rx="1.6" ry="2.2" fill="#26582a"/><ellipse cx="8.8" cy="10.3" rx="2.1" ry="2.9" fill="#6aa858"/><ellipse cx="12.0" cy="11.3" rx="1.8" ry="2.6" fill="#6aa858"/><ellipse cx="9.4" cy="32.6" rx="2.0" ry="2.8" fill="#6aa858"/><ellipse cx="3.8" cy="7.3" rx="1.0" ry="1.3" fill="#6aa858"/><ellipse cx="46.2" cy="12.7" rx="1.8" ry="2.5" fill="#48883e"/><ellipse cx="20.2" cy="31.3" rx="1.5" ry="2.1" fill="#6aa858"/><ellipse cx="8.4" cy="26.2" rx="0.9" ry="1.3" fill="#5a9a4c"/><ellipse cx="23.0" cy="24.3" rx="1.7" ry="2.3" fill="#2c6a2a"/><ellipse cx="13.5" cy="31.7" rx="1.1" ry="1.5" fill="#2c6a2a"/><ellipse cx="3.3" cy="17.5" rx="1.1" ry="1.6" fill="#2c6a2a"/><ellipse cx="8.5" cy="16.3" rx="1.6" ry="2.2" fill="#5a9a4c"/><ellipse cx="4.4" cy="9.9" rx="1.4" ry="2.0" fill="#48883e"/><ellipse cx="31.5" cy="25.4" rx="1.6" ry="2.3" fill="#5a9a4c"/><ellipse cx="28.3" cy="31.9" rx="1.5" ry="2.1" fill="#48883e"/><ellipse cx="33.6" cy="33.0" rx="0.8" ry="1.2" fill="#2c6a2a"/><ellipse cx="23.1" cy="26.5" rx="1.2" ry="1.7" fill="#2c6a2a"/><ellipse cx="3.6" cy="21.3" rx="1.8" ry="2.6" fill="#5a9a4c"/><ellipse cx="38.1" cy="31.6" rx="1.3" ry="1.8" fill="#26582a"/><ellipse cx="43.2" cy="30.4" rx="1.4" ry="1.9" fill="#2c6a2a"/><ellipse cx="41.4" cy="22.0" rx="1.7" ry="2.3" fill="#26582a"/><ellipse cx="18.2" cy="6.3" rx="0.9" ry="1.3" fill="#2c6a2a"/><ellipse cx="30.7" cy="33.8" rx="2.0" ry="2.8" fill="#48883e"/><ellipse cx="18.6" cy="26.6" rx="1.6" ry="2.3" fill="#26582a"/><ellipse cx="22.2" cy="21.2" rx="1.5" ry="2.1" fill="#6aa858"/><ellipse cx="1.4" cy="22.8" rx="1.5" ry="2.1" fill="#5a9a4c"/><ellipse cx="46.0" cy="9.2" rx="1.9" ry="2.6" fill="#26582a"/><ellipse cx="12.3" cy="6.3" rx="1.2" ry="1.7" fill="#6aa858"/><ellipse cx="9.7" cy="10.7" rx="2.1" ry="2.9" fill="#26582a"/><ellipse cx="23.9" cy="12.8" rx="1.4" ry="1.9" fill="#48883e"/><ellipse cx="9.5" cy="18.1" rx="1.9" ry="2.7" fill="#5a9a4c"/><ellipse cx="42.3" cy="16.8" rx="1.6" ry="2.3" fill="#48883e"/><ellipse cx="10.1" cy="9.8" rx="1.3" ry="1.8" fill="#2c6a2a"/><ellipse cx="34.1" cy="32.6" rx="1.2" ry="1.7" fill="#5a9a4c"/><ellipse cx="5.4" cy="19.2" rx="2.1" ry="2.9" fill="#26582a"/><ellipse cx="18.4" cy="20.6" rx="1.7" ry="2.4" fill="#6aa858"/><ellipse cx="21.7" cy="8.1" rx="0.8" ry="1.2" fill="#6aa858"/><ellipse cx="2.0" cy="25.8" rx="1.6" ry="2.2" fill="#48883e"/><ellipse cx="31.2" cy="21.8" rx="1.7" ry="2.4" fill="#26582a"/><ellipse cx="21.8" cy="6.7" rx="2.0" ry="2.7" fill="#5a9a4c"/><ellipse cx="37.4" cy="28.3" rx="2.2" ry="3.0" fill="#2c6a2a"/><ellipse cx="21.4" cy="23.6" rx="1.7" ry="2.4" fill="#48883e"/><ellipse cx="46.0" cy="25.2" rx="1.1" ry="1.5" fill="#26582a"/></g><path d="M0 29 Q8 27.5 16 29.5 Q24 28 32 29.5 Q40 28 48 29 V36 H0Z" fill="#2a5e26"/><path d="M0 33.4 L48 33 V37 H0Z" fill="#4c9a3e"/><path d="M0 35 L14 34.6 Q30 35 48 36.6 V44.6 H0Z" fill="#e4c42e"/><path d="M0 39 Q12 38.5 24 40 Q36 40.5 48 40 V44.6 H0Z" fill="#dcb424"/><path d="M0 41.2 Q8 41 18 42.8 L22 44.6 H0Z" fill="#d8701e"/></g></svg>
<svg class="a" style="left:0;top:0" width="110" height="147" viewBox="0 0 110 147"><defs><filter id="bt" x="-2%" y="-2%" width="104%" height="104%"><feGaussianBlur stdDeviation="0.3"/></filter></defs><g fill="#6e6e6e" opacity=".75" filter="url(#bt)"><rect x="63.0" y="54.2" width="5.9" height="1.5"/><rect x="69.8" y="54.2" width="7.0" height="1.5"/><rect x="77.8" y="54.2" width="9.0" height="1.5"/><rect x="87.4" y="54.2" width="4.1" height="1.5"/><rect x="92.6" y="54.2" width="6.1" height="1.5"/><rect x="99.4" y="54.2" width="2.6" height="1.5"/><rect x="63.0" y="58.1" width="10.7" height="1.5"/><rect x="74.6" y="58.1" width="9.1" height="1.5"/><rect x="84.4" y="58.1" width="9.1" height="1.5"/><rect x="94.6" y="58.1" width="7.4" height="1.5"/><rect x="63.0" y="62.0" width="9.4" height="1.5"/><rect x="73.0" y="62.0" width="10.1" height="1.5"/><rect x="84.0" y="62.0" width="6.4" height="1.5"/><rect x="91.1" y="62.0" width="10.9" height="1.5"/><rect x="65.0" y="65.8" width="9.8" height="1.5"/><rect x="75.9" y="65.8" width="9.7" height="1.5"/><rect x="86.7" y="65.8" width="7.2" height="1.5"/><rect x="95.0" y="65.8" width="7.0" height="1.5"/><rect x="63.0" y="69.7" width="11.0" height="1.5"/><rect x="74.7" y="69.7" width="5.1" height="1.5"/><rect x="80.5" y="69.7" width="11.7" height="1.5"/><rect x="93.1" y="69.7" width="8.9" height="1.5"/><rect x="63.0" y="73.6" width="8.1" height="1.5"/><rect x="71.9" y="73.6" width="6.8" height="1.5"/><rect x="79.6" y="73.6" width="8.7" height="1.5"/><rect x="89.5" y="73.6" width="9.5" height="1.5"/><rect x="100.1" y="73.6" width="1.9" height="1.5"/><rect x="63.0" y="77.5" width="9.4" height="1.5"/><rect x="73.1" y="77.5" width="10.9" height="1.5"/><rect x="85.1" y="77.5" width="11.2" height="1.5"/><rect x="97.3" y="77.5" width="4.7" height="1.5"/><rect x="63.0" y="81.4" width="10.7" height="1.5"/><rect x="74.6" y="81.4" width="6.3" height="1.5"/><rect x="81.5" y="81.4" width="10.8" height="1.5"/><rect x="93.5" y="81.4" width="4.7" height="1.5"/><rect x="99.3" y="81.4" width="2.7" height="1.5"/><rect x="65.0" y="85.2" width="6.4" height="1.5"/><rect x="72.4" y="85.2" width="11.0" height="1.5"/><rect x="84.0" y="85.2" width="8.9" height="1.5"/><rect x="93.6" y="85.2" width="8.4" height="1.5"/><rect x="63.0" y="89.1" width="11.0" height="1.5"/><rect x="75.2" y="89.1" width="8.0" height="1.5"/><rect x="84.5" y="89.1" width="6.5" height="1.5"/><rect x="91.6" y="89.1" width="8.8" height="1.5"/><rect x="9.0" y="92.8" width="5.6" height="1.5"/><rect x="15.4" y="92.8" width="8.9" height="1.5"/><rect x="25.0" y="92.8" width="4.3" height="1.5"/><rect x="30.5" y="92.8" width="1.5" height="1.5"/><rect x="9.0" y="100.8" width="1.5" height="1.5"/><rect x="9.0" y="105.1" width="7.7" height="1.5"/><rect x="17.6" y="105.1" width="9.2" height="1.5"/><rect x="27.7" y="105.1" width="8.5" height="1.5"/><rect x="37.1" y="105.1" width="11.5" height="1.5"/><rect x="9.0" y="108.9" width="7.4" height="1.5"/><rect x="17.5" y="108.9" width="5.9" height="1.5"/><rect x="24.2" y="108.9" width="11.8" height="1.5"/><rect x="36.9" y="108.9" width="8.4" height="1.5"/><rect x="45.9" y="108.9" width="3.1" height="1.5"/><rect x="9.0" y="112.8" width="4.2" height="1.5"/><rect x="14.1" y="112.8" width="9.1" height="1.5"/><rect x="23.8" y="112.8" width="9.0" height="1.5"/><rect x="33.7" y="112.8" width="9.4" height="1.5"/><rect x="44.0" y="112.8" width="5.0" height="1.5"/><rect x="9.0" y="116.6" width="4.2" height="1.5"/><rect x="13.8" y="116.6" width="9.4" height="1.5"/><rect x="24.4" y="116.6" width="4.6" height="1.5"/><rect x="9.0" y="120.4" width="1.5" height="1.5"/><rect x="9.0" y="124.4" width="6.9" height="1.5"/><rect x="16.7" y="124.4" width="7.0" height="1.5"/><rect x="24.6" y="124.4" width="6.4" height="1.5"/><rect x="31.8" y="124.4" width="10.2" height="1.5"/><rect x="42.6" y="124.4" width="6.4" height="1.5"/><rect x="9.0" y="128.2" width="6.5" height="1.5"/><rect x="16.2" y="128.2" width="10.4" height="1.5"/><rect x="27.4" y="128.2" width="5.5" height="1.5"/><rect x="33.7" y="128.2" width="9.6" height="1.5"/><rect x="44.0" y="128.2" width="3.0" height="1.5"/><rect x="9.0" y="132.8" width="10.7" height="1.5"/><rect x="20.5" y="132.8" width="10.8" height="1.5"/><rect x="32.1" y="132.8" width="6.7" height="1.5"/><rect x="39.8" y="132.8" width="6.2" height="1.5"/><rect x="9.0" y="137.0" width="5.8" height="1.5"/><rect x="15.5" y="137.0" width="8.2" height="1.5"/><rect x="24.4" y="137.0" width="10.5" height="1.5"/><rect x="36.0" y="137.0" width="5.5" height="1.5"/><rect x="42.2" y="137.0" width="3.8" height="1.5"/><rect x="9.0" y="141.0" width="10.5" height="1.5"/><rect x="20.3" y="141.0" width="5.0" height="1.5"/><rect x="26.1" y="141.0" width="10.4" height="1.5"/><rect x="37.2" y="141.0" width="6.8" height="1.5"/><rect x="44.8" y="141.0" width="1.2" height="1.5"/></g></svg>
<div class="a" style="left:0;top:0;width:100%;height:100%;box-shadow:inset 4px 4px 4px -1.5px rgba(0,0,0,.9)"></div>
</div>
<svg class="a" style="left:439px;top:110px" width="19" height="18" viewBox="0 0 19 18"><path d="M1 6H9V1L17.2 8.9L9 17V12H1Z" fill="#3a3a3a"/></svg>
<svg class="a" style="left:287px;top:163.8px" width="10" height="6.5" viewBox="0 0 10 6.5"><path d="M1 1L5 5L9 1" fill="none" stroke="#444" stroke-width="0.95"/></svg>
<svg class="a" style="left:287px;top:196.8px" width="10" height="6.5" viewBox="0 0 10 6.5"><path d="M1 1L5 5L9 1" fill="none" stroke="#444" stroke-width="0.95"/></svg>
<div class="a" style="left:458px;top:349px;width:7px;height:1px;background:#fff"></div><div class="a" style="left:461px;top:346px;width:1px;height:7px;background:#fff"></div>
</body></html>
